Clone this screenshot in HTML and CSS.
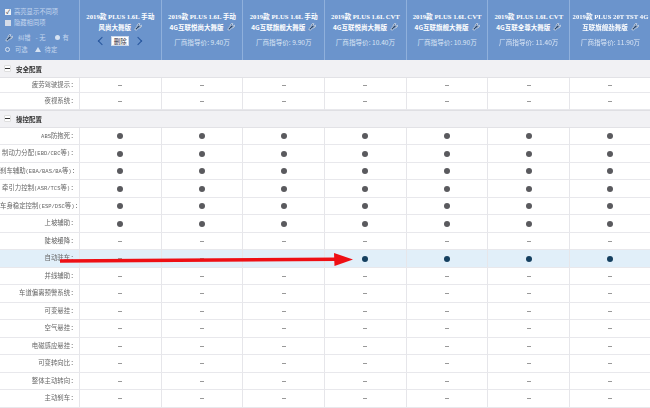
FILE: index.html
```html
<!DOCTYPE html>
<html lang="zh">
<head>
<meta charset="utf-8">
<title>参数配置</title>
<link rel="stylesheet" href="styles.css">
</head>
<body>
<svg width="0" height="0" class="defs"><defs>
<symbol id="wrench" viewBox="0 0 10 10"><path d="M6.6.8a2.6 2.6 0 0 0-2.4 3.4L.9 7.4l1.700 1.800 3.300-3.300A2.600 2.600 0 0 0 9.200 2.800L7.400 4.400 5.800 2.800 7.400 1z" fill="#26456f" stroke="#fff" stroke-width=".9"/></symbol>
</defs></svg>
<div class="page">
  <header class="head">
    <div class="legend">
      <div class="check"><span class="box on">✓</span>高亮显示不同项</div>
      <div class="check"><span class="box"></span>隐藏相同项</div>
      <div class="keys k1"><svg class="wr"><use href="#wrench"/></svg><span>纠错</span><span>- 无</span><i class="dot"></i><span>有</span></div>
      <div class="keys k2"><i class="ring"></i><span>可选</span><i class="tri"></i><span>待定</span></div>
    </div>
    <div class="car">
      <p class="name">2019款 PLUS 1.6L 手动</p>
      <p class="name">风尚大舞版<svg class="wr"><use href="#wrench"/></svg></p>
      <div class="pager"><span class="chev left"></span><span class="del">删除</span><span class="chev right"></span></div>
    </div>
    <div class="car"><p class="name">2019款 PLUS 1.6L 手动</p><p class="name">4G互联悦尚大舞版<svg class="wr"><use href="#wrench"/></svg></p><p class="price">厂商指导价: 9.40万</p></div>
    <div class="car"><p class="name">2019款 PLUS 1.6L 手动</p><p class="name">4G互联旗舰大舞版<svg class="wr"><use href="#wrench"/></svg></p><p class="price">厂商指导价: 9.90万</p></div>
    <div class="car"><p class="name">2019款 PLUS 1.6L CVT</p><p class="name">4G互联悦尚大舞版<svg class="wr"><use href="#wrench"/></svg></p><p class="price">厂商指导价: 10.40万</p></div>
    <div class="car"><p class="name">2019款 PLUS 1.6L CVT</p><p class="name">4G互联旗舰大舞版<svg class="wr"><use href="#wrench"/></svg></p><p class="price">厂商指导价: 10.90万</p></div>
    <div class="car"><p class="name">2019款 PLUS 1.6L CVT</p><p class="name">4G互联全尊大舞版<svg class="wr"><use href="#wrench"/></svg></p><p class="price">厂商指导价: 11.40万</p></div>
    <div class="car"><p class="name">2019款 PLUS 20T TST 4G</p><p class="name">互联旗舰劲舞版<svg class="wr"><use href="#wrench"/></svg></p><p class="price">厂商指导价: 11.90万</p></div>
  </header>
  <main id="table"></main>
  <svg class="arrow" width="650" height="408" viewBox="0 0 650 408"><path d="M60 261 L336 259.3" stroke="#ee0f14" stroke-width="3.4" fill="none"/><path d="M334 253 L353 259.4 L334.500 266z" fill="#ee0f14"/></svg>
</div>
<script src="table.js"></script>
</body>
</html>
```
FILE: table.js
```js
const data = [
  ["g", "安全配置"],
  ["r", "疲劳驾驶提示:", 0, "short"],
  ["r", "夜视系统:", 0],
  ["g", "操控配置"],
  ["r", "ABS防抱死:", 1],
  ["r", "制动力分配(EBD/CBC等):", 1],
  ["r", "刹车辅助(EBA/BAS/BA等):", 1],
  ["r", "牵引力控制(ASR/TCS等):", 1],
  ["r", "车身稳定控制(ESP/DSC等):", 1],
  ["r", "上坡辅助:", 1],
  ["r", "陡坡缓降:", 0],
  ["h", "自动驻车:"],
  ["r", "并线辅助:", 0],
  ["r", "车道偏离预警系统:", 0],
  ["r", "可变悬挂:", 0],
  ["r", "空气悬挂:", 0],
  ["r", "电磁感应悬挂:", 0],
  ["r", "可变转向比:", 0],
  ["r", "整体主动转向:", 0],
  ["r", "主动刹车:", 0],
];
const table = document.getElementById("table");
for (const [kind, label, filled, extra] of data) {
  const row = document.createElement("div");
  if (kind === "g") {
    row.className = "group";
    row.innerHTML = `<span class="minus"></span><b>${label}</b>`;
  } else {
    row.className = "row" + (kind === "h" ? " hl" : "") + (extra ? " short" : "");
    const text = label.replace(/[A-Z\/()]+/g, (m) => `<span class="abbr">${m}</span>`);
    let cells = `<div class="lab">${text}</div>`;
    for (let i = 0; i < 7; i++) {
      const on = kind === "h" ? i >= 3 : filled;
      cells += `<div class="cell">${on ? '<i class="pt"></i>' : '<span class="none"></span>'}</div>`;
    }
    row.innerHTML = cells;
  }
  table.appendChild(row);
}
```
FILE: styles.css
```css
* { box-sizing: border-box; }
html, body { margin: 0; padding: 0; background: #fff; }
body { width: 650px; height: 408px; overflow: hidden; font-family: "Noto Sans CJK SC", "Liberation Serif", serif; }
.defs { position: absolute; }
.page { position: relative; width: 650px; height: 408px; overflow: hidden; }
.arrow { position: absolute; left: 0; top: 0; }
p { margin: 0; }

.head { display: grid; grid-template-columns: 80px repeat(7, 81.7px); height: 60px; background: #6b94cc; filter: blur(.5px); }
.legend { padding: 6px 0 0 5px; font-size: 6.300px; color: #c4d6ee; border-right: 1px solid #8fb0dc; white-space: nowrap; }
.check { display: flex; align-items: center; gap: 3px; height: 11px; }
.box { width: 6px; height: 6px; background: #d5dce8; font-size: 6px; line-height: 6px; color: #223; text-align: center; }
.box.on { background: #eef2f7; }
.keys { display: flex; align-items: center; height: 11px; margin-top: 4px; }
.k1 { gap: 5px; }
.k2 { gap: 5px; margin-top: 1px; }
.keys .wr { margin: 0; }
.dot { width: 5px; height: 5px; border-radius: 50%; background: #d6e2f2; margin-left: 4px; margin-right: -2px; }
.ring { width: 5px; height: 5px; border-radius: 50%; border: 1px solid #d6e2f2; }
.tri { width: 0; height: 0; margin-left: 2px; margin-right: -1px; border: 3px solid transparent; border-top: 0; border-bottom: 5px solid #d6e2f2; }

.car { border-right: 1px solid #8fb0dc; display: flex; flex-direction: column; align-items: center; padding-top: 10.500px; color: #fff; }
.name { font-size: 6.700px; line-height: 11px; font-weight: 700; white-space: nowrap; font-family: "Liberation Serif", "Noto Sans CJK SC", serif; }
.name:nth-child(2) { font-size: 6.500px; font-family: "Noto Sans CJK SC", serif; display: flex; align-items: center; }
.price { font-size: 6.600px; line-height: 12px; margin-top: 3.500px; color: #dbe6f5; white-space: nowrap; }
.wr { width: 8px; height: 8px; margin-left: 3px; flex: none; }
.pager { display: flex; align-items: center; gap: 6px; margin-top: 3px; }
.del { width: 18px; height: 10px; background: #fff; border: 1px solid #cdd9ea; color: #334; font-size: 6.500px; line-height: 8px; text-align: center; }
.chev { width: 6px; height: 6px; border-left: 1.400px solid #24549c; border-bottom: 1.400px solid #24549c; }
.chev.left { transform: rotate(45deg); }
.chev.right { transform: rotate(225deg); }

#table { filter: blur(.5px); }
.group { height: 18px; background: #f1f1f4; display: flex; align-items: center; gap: 5px; padding-left: 4px; border-bottom: 1px solid #e2e2e6; font-size: 6.500px; color: #333; }
.group b { font-weight: 700; }
.group:nth-child(n+2) { height: 17.500px; border-top: 1px solid #dfdfe3; }
.minus { position: relative; width: 7px; height: 7px; background: #fff; border: 1px solid #ddd; border-radius: 1px; }
.minus::after { content: ""; position: absolute; left: 0; right: 0; top: 2px; height: 1px; background: #333; }
.row { display: grid; grid-template-columns: 80px repeat(7, 81.7px); height: 17.500px; border-bottom: 1px solid #e8e8ec; }
.row.short { height: 14.500px; }
.row.hl { background: #e1eff9; }
.lab { text-align: right; padding-right: 5px; font-family: "Liberation Mono", "Noto Sans CJK SC", monospace; font-size: 6.400px; line-height: 17px; color: #666; white-space: nowrap; border-right: 1px solid #e6e6ea; }
.abbr { font-size: 5.500px; }
.row.short .lab { line-height: 15px; }
.cell { display: flex; align-items: center; justify-content: center; border-right: 1px solid #e6e6ea; }
.none { width: 4px; height: 1px; background: #999; }
.pt { width: 6px; height: 6px; border-radius: 50%; background: #5a5a5e; }
.hl .pt { background: #143f5f; }
```
